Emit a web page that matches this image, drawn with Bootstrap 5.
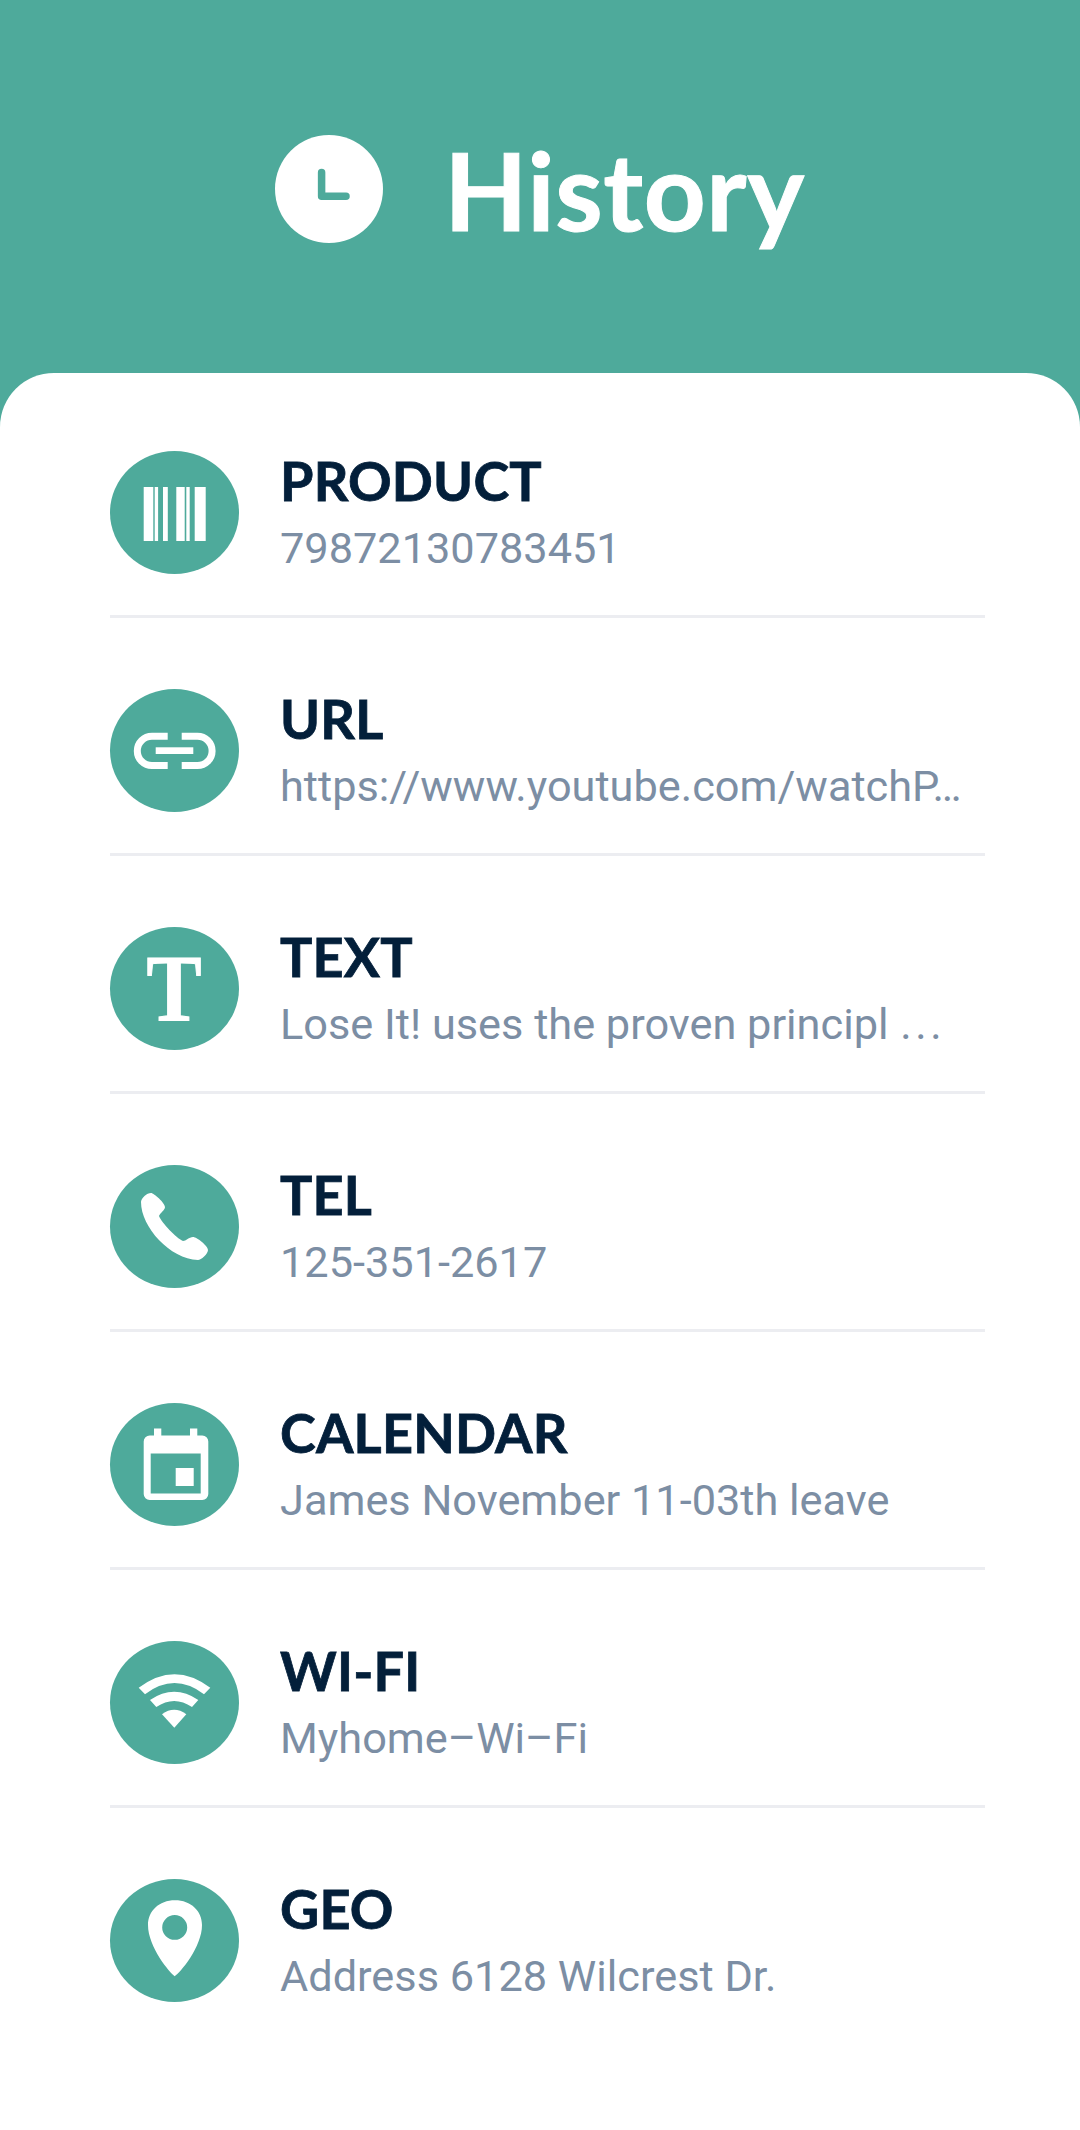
<!DOCTYPE html>
<html lang="en">
<head>
  <meta charset="UTF-8">
  <title>History</title>
  <link href="https://cdn.jsdelivr.net/npm/bootstrap@5.3.0/dist/css/bootstrap.min.css" rel="stylesheet">
  <style>
    body {
      background: #4eaa9b;
      font-family: "Roboto", sans-serif;
    }
    .top-bar {
      height: 373px;
      padding-top: 135px;
      gap: 61px;
    }
    .clock-badge {
      width: 108px;
      height: 108px;
    }
    .page-title {
      font-family: "Lato", sans-serif;
      font-size: 108px;
      font-weight: 700;
      line-height: 108px;
      letter-spacing: 0.6px;
      -webkit-text-stroke: 1px #fff;
      color: #fff;
      margin: 0;
    }
    .sheet {
      background: #fff;
      min-height: 1757px;
      border-radius: 54px 54px 0 0;
      padding: 78px 95px 0 110px;
    }
    .hist-item {
      height: 238px;
      padding: 0;
      background: none;
      border: 0;
    }
    .hist-row {
      height: 167px;
      border-bottom: 3px solid #ecedf1;
    }
    .hist-item:last-child .hist-row {
      border-bottom: 0;
    }
    .hist-icon {
      width: 129px;
      height: 123px;
      flex: none;
      background: #4eaa9b;
      border-radius: 50%;
    }
    .hist-icon svg {
      display: block;
      width: 129px;
      height: 123px;
    }
    .t-glyph {
      display: inline-block;
      font-family: "Liberation Serif", serif;
      font-weight: 700;
      font-size: 96px;
      line-height: 123px;
      color: #fff;
      -webkit-text-stroke: 1px #fff;
      transform: scaleX(0.86);
    }
    .hist-text {
      margin-left: 41px;
    }
    .hist-name {
      font-family: "Lato", sans-serif;
      font-size: 54px;
      font-weight: 700;
      line-height: 60px;
      letter-spacing: 0.2px;
      -webkit-text-stroke: 0.8px #031f3a;
      color: #031f3a;
    }
    .hist-value {
      font-size: 43.3px;
      line-height: 60px;
      margin-top: 8px;
      color: #7c8ea4;
      white-space: nowrap;
    }
    .wide-dots {
      margin-left: 1px;
      letter-spacing: 3.6px;
    }
  </style>
</head>
<body>
  <header class="top-bar d-flex justify-content-center align-items-start">
    <svg class="clock-badge" viewBox="0 0 108 108">
      <circle cx="54" cy="54" r="54" fill="#fff"/>
      <path d="M46.6 37.5V61.2H71" fill="none" stroke="#4eaa9b" stroke-width="7.5" stroke-linecap="round" stroke-linejoin="round"/>
    </svg>
    <h1 class="page-title">History</h1>
  </header>

  <main class="sheet">
    <ul class="list-group list-group-flush">
      <li class="list-group-item hist-item">
        <div class="hist-row d-flex align-items-start">
          <div class="hist-icon">
            <svg viewBox="0 0 129 123" fill="#fff">
              <rect x="33.7" y="36" width="9.6" height="54"/>
              <rect x="44.7" y="36" width="3.4" height="54"/>
              <rect x="53" y="36" width="4.8" height="54"/>
              <rect x="66.3" y="36" width="8.4" height="54"/>
              <rect x="76.3" y="36" width="3.4" height="54"/>
              <rect x="84.7" y="36" width="11" height="54"/>
            </svg>
          </div>
          <div class="hist-text">
            <div class="hist-name">PRODUCT</div>
            <div class="hist-value">79872130783451</div>
          </div>
        </div>
      </li>
      <li class="list-group-item hist-item">
        <div class="hist-row d-flex align-items-start">
          <div class="hist-icon">
            <svg viewBox="0 0 129 123" fill="#fff">
              <path d="M57.7 47.2H42a14.7 14.7 0 0 0 0 29.4H57.7M71.7 47.2H87.4a14.7 14.7 0 0 1 0 29.4H71.7" fill="none" stroke="#fff" stroke-width="7"/>
              <rect x="45.7" y="58.3" width="37.6" height="6.7"/>
            </svg>
          </div>
          <div class="hist-text">
            <div class="hist-name">URL</div>
            <div class="hist-value">https://www.youtube.com/watchP…</div>
          </div>
        </div>
      </li>
      <li class="list-group-item hist-item">
        <div class="hist-row d-flex align-items-start">
          <div class="hist-icon text-center"><span class="t-glyph">T</span></div>
          <div class="hist-text">
            <div class="hist-name">TEXT</div>
            <div class="hist-value">Lose It! uses the proven principl <span class="wide-dots">...</span></div>
          </div>
        </div>
      </li>
      <li class="list-group-item hist-item">
        <div class="hist-row d-flex align-items-start">
          <div class="hist-icon">
            <svg viewBox="0 0 129 123" fill="#fff">
              <path d="M31 37C31 33 37 28 41 28C44 28 55 38 55 42C55 45 50 48 49 51C52 58 66 73 73 76C76 76 79 72 83 72C87 72 98 81 98 85C98 89 91 95 88 95C60 94 31 62 31 37Z"/>
            </svg>
          </div>
          <div class="hist-text">
            <div class="hist-name">TEL</div>
            <div class="hist-value">125-351-2617</div>
          </div>
        </div>
      </li>
      <li class="list-group-item hist-item">
        <div class="hist-row d-flex align-items-start">
          <div class="hist-icon">
            <svg viewBox="0 0 129 123" fill="#fff">
              <path fill-rule="evenodd" d="M44 25.6H51.3V32.4H80V25.6H87.3V32.4H92.3A6 6 0 0 1 98.3 38.4V91A6 6 0 0 1 92.3 97H39.7A6 6 0 0 1 33.7 91V38.4A6 6 0 0 1 39.7 32.4H44ZM40.7 50.4V90.4H90.7V50.4ZM65.7 65H83.7V83H65.7Z"/>
            </svg>
          </div>
          <div class="hist-text">
            <div class="hist-name">CALENDAR</div>
            <div class="hist-value">James November 11-03th leave</div>
          </div>
        </div>
      </li>
      <li class="list-group-item hist-item">
        <div class="hist-row d-flex align-items-start">
          <div class="hist-icon">
            <svg viewBox="0 0 129 123" fill="#fff">
              <path d="M28.7 46.8Q64.5 19.6 100.3 46.8L94 53.2Q64.5 30.8 35 53.2Z"/>
              <path d="M40 59Q64.2 42.6 88.3 59L82 66Q64.2 54 46.3 66Z"/>
              <path d="M52 73.2Q64.2 64.4 76.3 73.2L64.3 86.8Z"/>
            </svg>
          </div>
          <div class="hist-text">
            <div class="hist-name">WI-FI</div>
            <div class="hist-value">Myhome–Wi–Fi</div>
          </div>
        </div>
      </li>
      <li class="list-group-item hist-item">
        <div class="hist-row d-flex align-items-start">
          <div class="hist-icon">
            <svg viewBox="0 0 129 123" fill="#fff">
              <path fill-rule="evenodd" d="M65 21.2C49 21.2 38 32 38 46C38 68 60 94 64.7 97.2C70 94 92 68 92 46C92 32 81 21.2 65 21.2ZM64.7 36A12.5 12.4 0 1 1 64.7 60.8A12.5 12.4 0 1 1 64.7 36Z"/>
            </svg>
          </div>
          <div class="hist-text">
            <div class="hist-name">GEO</div>
            <div class="hist-value">Address 6128 Wilcrest Dr.</div>
          </div>
        </div>
      </li>
    </ul>
  </main>

  <script src="https://cdn.jsdelivr.net/npm/bootstrap@5.3.0/dist/js/bootstrap.bundle.min.js"></script>
</body>
</html>
